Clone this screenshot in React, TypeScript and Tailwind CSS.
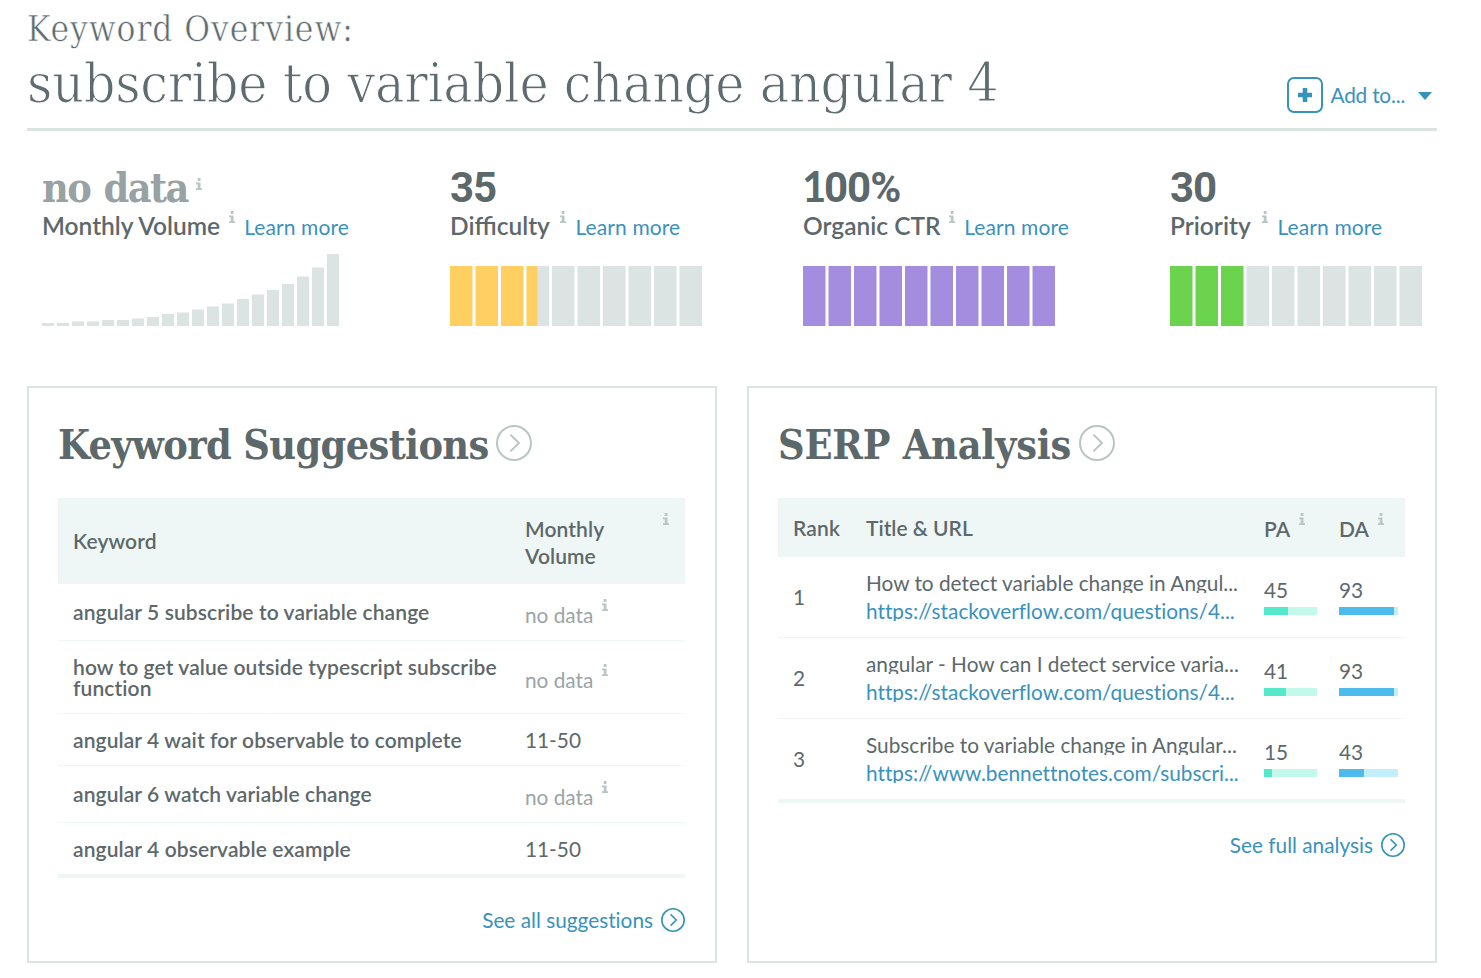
const SLAB = "font-['Roboto_Slab','DejaVu_Serif_Condensed','DejaVu_Serif',serif]";

function Info({ className = '' }: { className?: string }) {
  return (
    <svg className={`shrink-0 ${className}`} width="6" height="12" viewBox="0 0 6 12" fill="#b9c6c4">
      <path d="M1.7 0h2.8v3H1.7zM0 4.4h4.5v5.9H6V12H0v-1.7h1.7V6.2H0z" />
    </svg>
  );
}

function CircleArrow({ size, color, stroke }: { size: number; color: string; stroke: number }) {
  return (
    <svg className="shrink-0" width={size} height={size} viewBox="0 0 36 36" fill="none" stroke={color} strokeWidth={stroke}>
      <circle cx="18" cy="18" r={18 - stroke / 2} />
      <path d="M14.4 9.6l8.5 8.4-8.5 8.4" />
    </svg>
  );
}

function Segments({ value, color }: { value: number; color: string }) {
  return (
    <svg className="mt-[24px] block" width="252" height="60">
      {Array.from({ length: 10 }, (_, i) => {
        const part = Math.max(0, Math.min(1, value / 10 - i));
        return (
          <g key={i}>
            {part < 1 && <rect x={i * 25.5 + part * 22.5} y="0" width={22.5 * (1 - part)} height="60" fill="#dbe4e2" />}
            {part > 0 && <rect x={i * 25.5} y="0" width={22.5 * part} height="60" fill={color} />}
          </g>
        );
      })}
    </svg>
  );
}

const volumes = [3, 3, 4.5, 4.5, 6, 6, 7.5, 9, 12, 13.5, 16.5, 19.5, 22.5, 27, 31.5, 36, 42, 49.5, 58.5, 72];

function StatLabel({ text, className }: { text: string; className: string }) {
  return (
    <div className="flex h-[30px] items-start whitespace-nowrap">
      <span className={`mt-[-1px] text-[24.5px] font-semibold leading-[30px] [font-variant-ligatures:normal] ${className}`}>{text}</span>
      <Info className="mt-[-1px]" />
      <a className="ml-[9.5px] text-[21px] leading-[30px] tracking-[0.1px] text-[#3992bc]">Learn more</a>
    </div>
  );
}

const keywords = [
  { text: 'angular 5 subscribe to variable change', h: 'h-[57px]', volume: '' },
  { text: 'how to get value outside typescript subscribe function', h: 'h-[73px]', volume: '' },
  { text: 'angular 4 wait for observable to complete', h: 'h-[52px]', volume: '11-50' },
  { text: 'angular 6 watch variable change', h: 'h-[57px]', volume: '' },
  { text: 'angular 4 observable example', h: 'h-[51px]', volume: '11-50' },
];

const results = [
  { title: 'How to detect variable change in Angul...', url: 'https://stackoverflow.com/questions/4...', pa: 45, da: 93 },
  { title: 'angular - How can I detect service varia...', url: 'https://stackoverflow.com/questions/4...', pa: 41, da: 93 },
  { title: 'Subscribe to variable change in Angular...', url: 'https://www.bennettnotes.com/subscri...', pa: 15, da: 43 },
];

const STAT = "h-[48px] font-['Roboto',sans-serif] text-[42px] font-bold leading-[48px] tracking-[-1px]";

export default function App() {
  return (
    <main className="h-[978px] w-[1481px] overflow-hidden bg-white px-[27px] font-['Lato',sans-serif] text-[20.8px] text-[#5d686b] [font-variant-ligatures:none]">
      <header className="flex h-[131px] w-[1410px] items-start justify-between border-b-[3px] border-[#dbe4e2]">
        <h1 className={`${SLAB} whitespace-nowrap font-light text-[#5f6c6f]`}>
          <span className="block pt-[5px] text-[35px] leading-[48px] tracking-[0.9px] [-webkit-text-stroke:0.5px_white]">Keyword Overview:</span>
          <span className="block text-[55px] leading-[61px] tracking-[-0.25px] [-webkit-text-stroke:1px_white]">subscribe to variable change angular 4</span>
        </h1>
        <button className="mr-[5px] mt-[77px] flex h-[36px] items-center whitespace-nowrap text-[#3992bc]">
          <svg width="36" height="36" viewBox="0 0 36 36" fill="none" stroke="#3594bb">
            <rect x="1" y="1" width="34" height="34" rx="6" strokeWidth="2" />
            <path d="M18 11v14M11 18h14" strokeWidth="4.6" />
          </svg>
          <span className="ml-[7.5px] w-[74.5px] text-left tracking-[-0.2px]">Add to...</span>
          <svg className="ml-[13px] mt-[2px]" width="14" height="8" viewBox="0 0 14 8" fill="#3594bb">
            <path d="M0 0h14L7 8z" />
          </svg>
        </button>
      </header>

      <section className="flex h-[255px] w-[1410px] justify-between px-[15px] pt-[33px]">
        <div className="w-[307px]">
          <div className="flex h-[48px] items-start">
            <span className={`${SLAB} w-[154px] whitespace-nowrap text-[41px] font-bold leading-[48px] tracking-[-1.6px] [word-spacing:2px] text-[#98a2a3]`}>no data</span>
            <Info className="mt-[14px]" />
          </div>
          <StatLabel text="Monthly Volume" className="w-[187px]" />
          <svg className="mt-[12px] block" width="298" height="72" fill="#dbe4e2">
            {volumes.map((v, i) => (
              <rect key={i} x={i * 15} y={72 - v} width="12" height={v} />
            ))}
          </svg>
        </div>
        <div className="w-[252px]">
          <div className={STAT}>35</div>
          <StatLabel text="Difficulty" className="w-[110px]" />
          <Segments value={35} color="#ffd061" />
        </div>
        <div className="w-[266px]">
          <div className={STAT}>
            <span className="inline-block w-[21px] font-['Lato',sans-serif] leading-[40px] tracking-[0px] -indent-[1px]">1</span>00%
          </div>
          <StatLabel text="Organic CTR" className="w-[146px]" />
          <Segments value={100} color="#a48ddf" />
        </div>
        <div className="w-[252px]">
          <div className={STAT}>30</div>
          <StatLabel text="Priority" className="w-[92px]" />
          <Segments value={30} color="#6bd34e" />
        </div>
      </section>

      <div className="flex w-[1410px] gap-[30px]">
        <section className="h-[577px] w-[690px] border-2 border-[#dbe4e2] px-[29px]">
          <div className="flex h-[110px] items-start pt-[37px]">
            <h2 className={`${SLAB} w-[438px] whitespace-nowrap text-[41px] font-bold leading-[40px] tracking-[-0.65px]`}>Keyword Suggestions</h2>
            <CircleArrow size={36} color="#b9c6c4" stroke={2} />
          </div>
          <div className="flex h-[86px] w-[627px] items-center bg-[#eff7f6] pl-[15px] text-[21px] font-semibold tracking-[0.1px]">
            <span className="w-[452px]">Keyword</span>
            <span className="w-[138px] pr-[40px] pt-[2px] leading-[27px]">Monthly Volume</span>
            <Info className="mt-[-44px]" />
          </div>
          <div className="w-[627px] border-b-4 border-[#eff7f6]">
            {keywords.map((k, i) => (
              <div key={k.text} className={`${k.h} flex items-center ${i < 4 ? 'border-b' : ''} border-[#eff7f6] pl-[15px]`}>
                <span className="w-[452px] pb-[1px] pr-[20px] text-[21px] font-semibold leading-[21px] tracking-[0.1px]">{k.text}</span>
                {k.volume ? (
                  <span>{k.volume}</span>
                ) : (
                  <span className="flex items-center text-[#9ba4a5]">
                    <span className="w-[77px] pt-[6px]">no data</span>
                    <Info className="mt-[-15px]" />
                  </span>
                )}
              </div>
            ))}
          </div>
          <a className="mt-[26px] flex w-[627px] items-center justify-end gap-[8px] text-[#3992bc]">
            See all suggestions
            <CircleArrow size={24} color="#3594bb" stroke={2.4} />
          </a>
        </section>

        <section className="h-[577px] w-[690px] border-2 border-[#dbe4e2] px-[29px]">
          <div className="flex h-[110px] items-start pt-[37px]">
            <h2 className={`${SLAB} w-[301px] whitespace-nowrap text-[41px] font-bold leading-[40px] tracking-[-0.25px]`}>SERP Analysis</h2>
            <CircleArrow size={36} color="#b9c6c4" stroke={2} />
          </div>
          <div className="flex h-[59px] w-[627px] items-center bg-[#eff7f6] pl-[15px] text-[21px] font-semibold">
            <span className="w-[73px] tracking-[0.2px]">Rank</span>
            <span className="w-[398px]">Title &amp; URL</span>
            <span className="w-[35px] pt-[2px]">PA</span>
            <Info className="mr-[34px] mt-[-17px]" />
            <span className="w-[39px] pt-[2px]">DA</span>
            <Info className="mt-[-17px]" />
          </div>
          <div className="w-[627px] border-b-4 border-[#eff7f6]">
            {results.map((r, i) => (
              <div key={i} className={`flex items-center pl-[15px] ${i < 2 ? 'h-[81px] border-b border-[#f0f4f4]' : 'h-[80px]'}`}>
                <span className="w-[73px]">{i + 1}</span>
                <div className="w-[398px] whitespace-nowrap">
                  <div className="mt-[-1px] h-[21px] w-[380px] overflow-hidden leading-[21px]">{r.title}</div>
                  <div className="mt-[7px] h-[21px] w-[380px] overflow-hidden leading-[21px] text-[#3992bc]">{r.url}</div>
                </div>
                <div className="mt-[-3px] w-[75px]">
                  <div className="leading-[26px]">{r.pa}</div>
                  <div className="mt-[4px] h-[8px] w-[53px] bg-[#c2f9eb]">
                    <div className="h-full bg-[#55e8cb]" style={{ width: `${r.pa}%` }} />
                  </div>
                </div>
                <div className="mt-[-3px]">
                  <div className="leading-[26px]">{r.da}</div>
                  <div className="mt-[4px] h-[8px] w-[59px] bg-[#c3eefb]">
                    <div className="h-full bg-[#4dbbeb]" style={{ width: `${r.da}%` }} />
                  </div>
                </div>
              </div>
            ))}
          </div>
          <a className="mt-[26px] flex w-[627px] items-center justify-end gap-[8px] text-[#3992bc]">
            See full analysis
            <CircleArrow size={24} color="#3594bb" stroke={2.4} />
          </a>
        </section>
      </div>
    </main>
  );
}
